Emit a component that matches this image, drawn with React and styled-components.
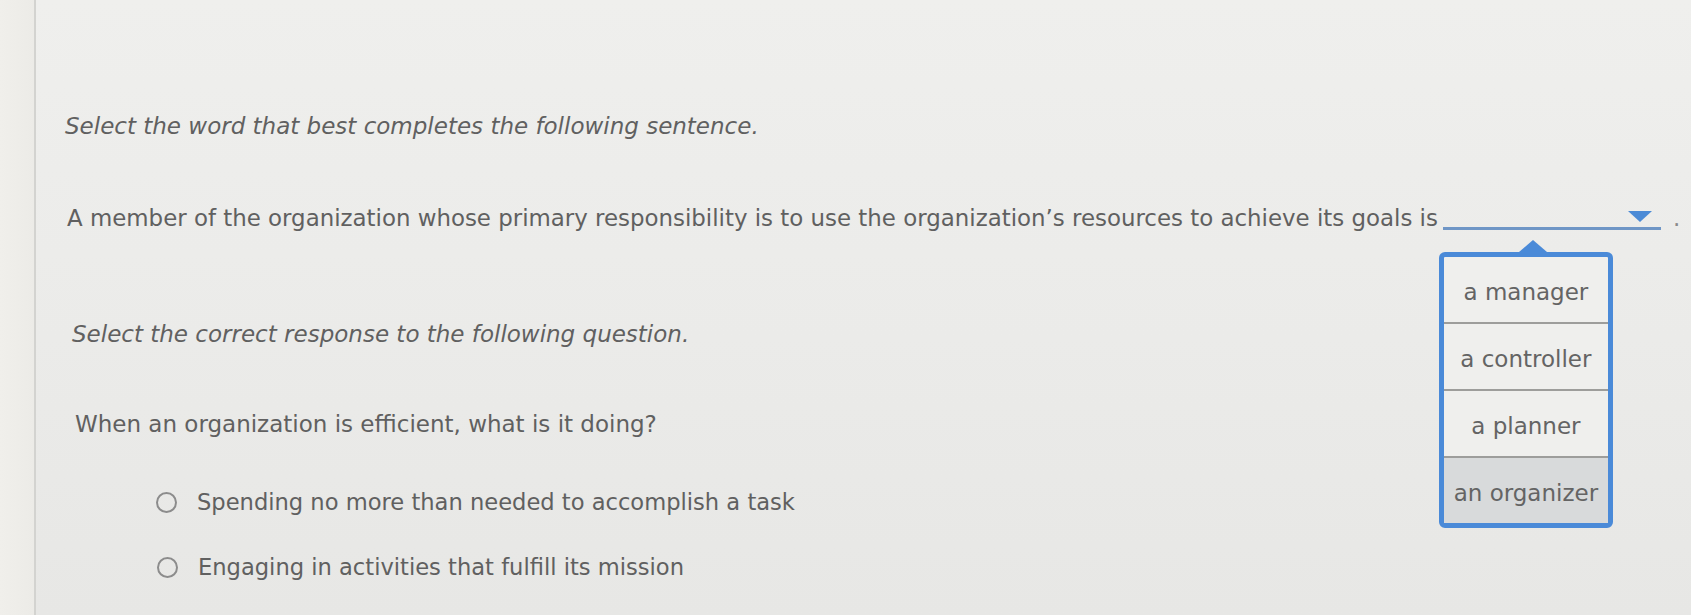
import React from "react";
import styled, { createGlobalStyle } from "styled-components";

const GlobalStyle = createGlobalStyle`
  html, body {
    margin: 0;
    padding: 0;
    height: 100%;
  }
  body {
    background: #ebebe9;
    font-family: "DejaVu Sans", Verdana, sans-serif;
    overflow: hidden;
  }
`;

const Page = styled.div`
  display: flex;
  width: 1691px;
  height: 615px;
  background: linear-gradient(180deg, #efefed 0%, #ebebe9 55%, #e7e7e5 100%);
`;

const SideStrip = styled.div`
  width: 34px;
  flex-shrink: 0;
  background: linear-gradient(90deg, #f0efeb 0%, #ecebe7 100%);
  border-right: 2px solid #d3d3d0;
`;

const Content = styled.main`
  flex: 1;
  display: flex;
  flex-direction: column;
  padding: 114px 0 0 29px;
  color: #606060;
  font-size: 23px;
  line-height: 24px;
`;

const Instruction = styled.p`
  margin: ${(p) => p.$gap || 0}px 0 0 ${(p) => p.$indent || 0}px;
  font-style: italic;
`;

const Sentence = styled.p`
  margin: ${(p) => p.$gap || 0}px 0 0 ${(p) => p.$indent || 0}px;
  font-size: ${(p) => p.$size || 23}px;
  white-space: nowrap;
  display: flex;
  align-items: center;
`;

const Blank = styled.span`
  position: relative;
  display: inline-block;
  width: 218px;
  height: 20px;
  margin-left: 5px;
  border-bottom: 3px solid #6f96c6;
`;

const BlankArrow = styled.span`
  position: absolute;
  right: 9px;
  top: 4px;
  width: 0;
  height: 0;
  border-left: 12px solid transparent;
  border-right: 12px solid transparent;
  border-top: 11px solid #4a8ad6;
`;

const Period = styled.span`
  margin-left: 12px;
  color: #8a8a8a;
`;

const Dropdown = styled.ul`
  position: absolute;
  left: -4px;
  top: 45px;
  width: 164px;
  margin: 0;
  padding: 0;
  list-style: none;
  border: 5px solid #4a8ad8;
  border-radius: 6px;
  background: #efefed;
  z-index: 5;

  &::before {
    content: "";
    position: absolute;
    left: 75px;
    top: -17px;
    border-left: 14px solid transparent;
    border-right: 14px solid transparent;
    border-bottom: 12px solid #4a8ad8;
  }
`;

const Option = styled.li`
  height: 60px;
  padding-top: 5px;
  display: flex;
  align-items: center;
  justify-content: center;
  color: #646464;
  font-size: 23px;
  background: ${(p) => (p.$hover ? "#d8dadb" : "transparent")};
  border-top: ${(p) => (p.$first ? "none" : "2px solid #9d9d9b")};
`;

const ChoiceList = styled.div`
  display: flex;
  flex-direction: column;
  gap: 41px;
  margin: 54px 0 0 91px;
  font-size: 22.6px;
`;

const Choice = styled.label`
  display: flex;
  align-items: center;
  gap: 20px;
`;

const Radio = styled.span`
  width: 17px;
  height: 17px;
  border: 2px solid #8c8c8c;
  border-radius: 50%;
  flex-shrink: 0;
  margin-left: ${(p) => p.$shift || 0}px;
`;

const words = ["a manager", "a controller", "a planner", "an organizer"];

const App = () => {
  return (
    <>
      <GlobalStyle />
      <Page>
        <SideStrip />
        <Content>
          <Instruction>
            Select the word that best completes the following sentence.
          </Instruction>
          <Sentence $gap={68} $indent={2} $size={22.9}>
            A member of the organization whose primary responsibility is to
            use the organization’s resources to achieve its goals is
            <Blank>
              <BlankArrow />
              <Dropdown>
                {words.map((w, i) => (
                  <Option key={w} $first={i === 0} $hover={i === 3}>
                    {w}
                  </Option>
                ))}
              </Dropdown>
            </Blank>
            <Period>.</Period>
          </Sentence>
          <Instruction $gap={92} $indent={7}>
            Select the correct response to the following question.
          </Instruction>
          <Sentence $gap={66} $indent={10}>
            When an organization is efficient, what is it doing?
          </Sentence>
          <ChoiceList>
            <Choice>
              <Radio />
              Spending no more than needed to accomplish a task
            </Choice>
            <Choice>
              <Radio $shift={1} />
              Engaging in activities that fulfill its mission
            </Choice>
          </ChoiceList>
        </Content>
      </Page>
    </>
  );
};

export default App;
